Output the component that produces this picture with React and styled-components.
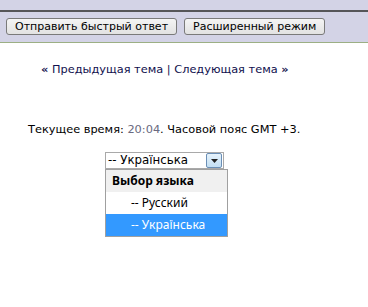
import React from 'react'
import styled, { createGlobalStyle } from 'styled-components'

const GlobalStyle = createGlobalStyle`
  body {
    margin: 0;
    background: #ffffff;
    font-family: "DejaVu Sans", Verdana, sans-serif;
    font-size: 11.35px;
    color: #000;
  }
`

const Page = styled.div`
  width: 368px;
  height: 307px;
  overflow: hidden;
`

const Toolbar = styled.div`
  background: #d3d3e6;
  padding-top: 10px;
  height: 43px;
  box-sizing: border-box;
  border-bottom: 1px solid #9caf84;
`

const Rule = styled.div`
  height: 2px;
  background: #555558;
`

const ButtonRow = styled.div`
  display: flex;
  gap: 7px;
  padding: 6px 0 0 6px;
`

const Button = styled.button`
  font-family: "DejaVu Sans", Verdana, sans-serif;
  font-size: 11px;
  height: 17px;
  padding: 0 8px;
  border: 1px solid #7a7a7a;
  border-radius: 3px;
  background: linear-gradient(#f4f4f4, #e2e2e2);
  color: #000;
  line-height: 15px;
`

const Nav = styled.div`
  margin: 20px 0 0 41px;
  color: #10104e;
  line-height: 13px;
`

const Arrow = styled.span`
  font-weight: bold;
`

const Link = styled.span`
  color: #10104e;
`

const Time = styled.div`
  margin: 47px 0 0 28px;
  line-height: 13px;
`

const Clock = styled.span`
  color: #6a6a80;
`

const SelectWrap = styled.div`
  position: relative;
  margin: 16px 0 0 105px;
  width: 119px;
`

const Select = styled.div`
  height: 15px;
  border: 1px solid #a9a9a9;
  display: flex;
  align-items: center;
  justify-content: space-between;
  background: #fff;
  line-height: 15px;
  padding-left: 2px;
  font-size: 11.8px;
`

const DropButton = styled.div`
  width: 14px;
  height: 13px;
  margin-right: 1px;
  border: 1px solid #6b8fb6;
  border-radius: 2px;
  background: linear-gradient(#e6f2fb, #c3dff3);
  display: flex;
  align-items: center;
  justify-content: center;
`

const Menu = styled.div`
  position: absolute;
  top: 17px;
  left: 0;
  width: 121px;
  border: 1px solid #a0a0a0;
  background: #fff;
  font-family: "Noto Sans", "DejaVu Sans", sans-serif;
  font-size: 12px;
`

const Option = styled.div`
  height: 22px;
  line-height: 22px;
  padding-left: ${p => (p.$header ? '6px' : '25px')};
  font-weight: ${p => (p.$header ? 'bold' : 'normal')};
  background: ${p => (p.$header ? '#f0f0f0' : p.$active ? '#3399ff' : '#fff')};
  color: ${p => (p.$active ? '#fff' : '#000')};
`

export default function App () {
  return <Page>
    <GlobalStyle />
    <Toolbar>
      <Rule />
      <ButtonRow>
        <Button>Отправить быстрый ответ</Button>
        <Button>Расширенный режим</Button>
      </ButtonRow>
    </Toolbar>
    <Nav>
      <Arrow>«</Arrow> <Link>Предыдущая тема</Link> | <Link>Следующая тема</Link> <Arrow>»</Arrow>
    </Nav>
    <Time>
      Текущее время: <Clock>20:04</Clock>. Часовой пояс GMT +3.
    </Time>
    <SelectWrap>
      <Select>
        <span>-- Українська</span>
        <DropButton>
          <svg width='7' height='4' viewBox='0 0 7 4'><path d='M0 0h7L3.5 4z' fill='#222' /></svg>
        </DropButton>
      </Select>
      <Menu>
        <Option $header>Выбор языка</Option>
        <Option>-- Русский</Option>
        <Option $active>-- Українська</Option>
      </Menu>
    </SelectWrap>
  </Page>
}
